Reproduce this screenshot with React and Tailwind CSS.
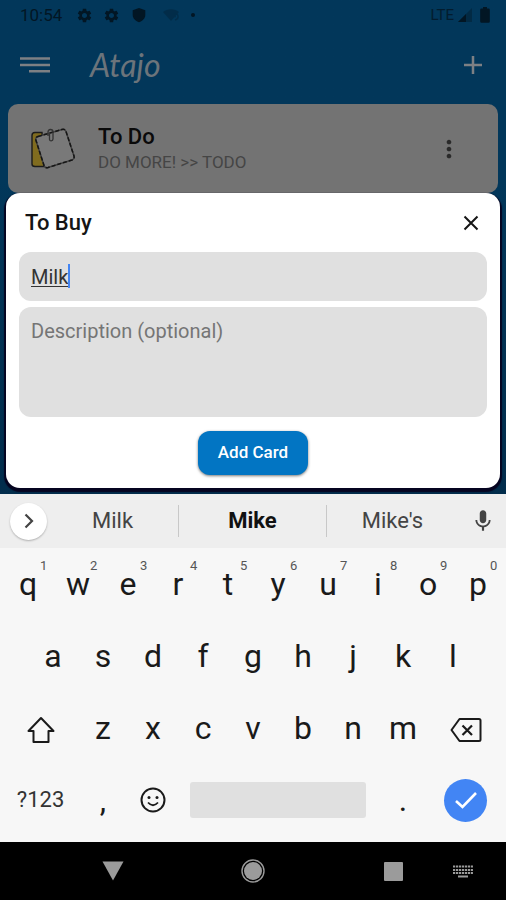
import React, { useState } from 'react';
import { MdSettings, MdMoreVert, MdMic } from 'react-icons/md';

const topRow = ['q', 'w', 'e', 'r', 't', 'y', 'u', 'i', 'o', 'p'];
const middleRow = ['a', 's', 'd', 'f', 'g', 'h', 'j', 'k', 'l'];
const bottomRow = ['z', 'x', 'c', 'v', 'b', 'n', 'm'];

const StatusBar = () => (
  <div className="flex items-center justify-between h-[30px] pl-5 pr-4 text-[#021624]">
    <div className="flex items-center">
      <span className="w-[56px] text-[17px] leading-5">10:54</span>
      <MdSettings className="w-[17px] h-[17px] mr-[10px]" />
      <MdSettings className="w-[17px] h-[17px] mr-3" />
      <svg viewBox="0 0 14 16" className="w-[14px] h-4 mr-4">
        <path d="M7 1 13.3 3.2V8c0 3.4-2.6 5.8-6.3 7.2C3.300 13.800.7 11.400.7 8V3.200Z" fill="currentColor" />
      </svg>
      <svg viewBox="0 0 18 14" className="w-[18px] h-[14px] mr-[11px] opacity-30">
        <path d="M1 4C5.500.200 12.500.200 17 4L9 13Z" fill="currentColor" />
        <path d="M12 6q3.500-1 4 2t-3 4M12 8.500h2" fill="none" stroke="currentColor" strokeWidth="1.500" />
      </svg>
      <span className="w-1 h-1 rounded-full bg-current" />
    </div>
    <div className="flex items-center">
      <span className="text-[15px] leading-5 mr-1 opacity-80">LTE</span>
      <svg viewBox="0 0 14 14" className="w-[14px] h-[14px] mr-2">
        <path d="M14 0V14H0Z" fill="currentColor" opacity="0.4" />
        <path d="M8 6V14H0Z" fill="currentColor" />
      </svg>
      <svg viewBox="0 0 10 16" className="w-[10px] h-4">
        <path d="M3 0h4v1.500h1.500a1.300 1.300 0 0 1 1.300 1.300v11.700a1.300 1.300 0 0 1-1.300 1.300h-7A1.300 1.300 0 0 1 .2 14.500V2.800a1.300 1.300 0 0 1 1.300-1.300H3Z" fill="currentColor" />
      </svg>
    </div>
  </div>
);

const AppBar = () => (
  <header className="flex items-center h-[70px] pl-5 pr-6 text-[#7d8084]">
    <button aria-label="Menu" className="mr-10">
      <svg viewBox="0 0 30 18" className="w-[30px] h-[18px]">
        <path d="M0 2.500H30M0 9H30M9 15.200H30" stroke="currentColor" strokeWidth="2.400" />
      </svg>
    </button>
    <h1 className="flex-1 font-[Lato] italic text-[32px] leading-9 text-[#6c747b]">Atajo</h1>
    <button aria-label="Add">
      <svg viewBox="0 0 18 18" className="w-[18px] h-[18px]">
        <path d="M9 0V18M0 9H18" stroke="currentColor" strokeWidth="2.500" />
      </svg>
    </button>
  </header>
);

const NotesIcon = () => (
  <svg viewBox="0 0 46 42" className="w-[46px] h-[42px] shrink-0">
    <path d="M12 4.500H5Q2 4.500 2 7.500V36q0 2.500 3 2.500h9Z" fill="#806c1f" stroke="#1c1c1c" strokeWidth="1.400" />
    <path d="M8 8.500 32 1.500q3-.8 4 2L44 28q.8 3-2 4L18 39.500q-3 .8-4-2L6 12.500q-1-3 2-4Z" fill="#797979" stroke="#404040" strokeWidth="1.500" />
    <path d="M8 8.500 32 1.500q3-.8 4 2L44 28q.8 3-2 4L18 39.500q-3 .8-4-2L6 12.500q-1-3 2-4Z" fill="none" stroke="#151515" strokeWidth="1.500" strokeDasharray="4 2" />
    <path d="M18 8V4q0-2.500 2.500-2.500T23 4v7q0 1.800-1.800 1.800T19.500 11V6" fill="none" stroke="#333" strokeWidth="1.300" />
  </svg>
);

const ListCard = () => (
  <section className="flex items-center h-[89px] mx-2 mt-1 pl-[22px] pr-[35px] rounded-[10px] bg-[#737373]">
    <NotesIcon />
    <div className="flex-1 ml-[22px]">
      <h2 className="text-[22px] leading-[26px] font-medium text-[#0a0a0a]">To Do</h2>
      <p className="text-[17px] leading-6 text-[#454545]">DO MORE! &gt;&gt; TODO</p>
    </div>
    <button aria-label="More options">
      <MdMoreVert className="w-7 h-7 text-[#2a2a2a]" />
    </button>
  </section>
);

const AddCardDialog = () => {
  const [title, setTitle] = useState('Milk');

  return (
    <form
      onSubmit={(e) => e.preventDefault()}
      className="flex flex-col mx-[6px] px-[13px] pb-[13px] rounded-[14px] bg-white shadow-[0_2px_1px_2px_#050420]"
    >
      <div className="flex items-center justify-between h-[59px] pl-[6px] pr-2">
        <h2 className="text-[22px] leading-7 font-medium text-[#151515]">To Buy</h2>
        <button type="button" aria-label="Close">
          <svg viewBox="0 0 16 16" className="w-4 h-4">
            <path d="M1.500 1.500 14.500 14.500M14.500 1.500 1.500 14.500" stroke="#151515" strokeWidth="2" />
          </svg>
        </button>
      </div>
      <div className="relative">
        <input
          aria-label="Card title"
          value={title}
          onChange={(e) => setTitle(e.target.value)}
          className="block w-full h-[49px] px-3 rounded-xl bg-[#e0e0e0] text-[20px] text-[#333] underline decoration-1 underline-offset-2 outline-none"
        />
        {/* Text caret */}
        <span className="absolute left-[49px] top-3 w-[2px] h-6 bg-[#4285f4]" />
      </div>
      <textarea
        aria-label="Description"
        placeholder="Description (optional)"
        className="block w-full h-[110px] mt-[6px] px-3 py-3 rounded-xl bg-[#e0e0e0] text-[20px] leading-6 placeholder:text-[#757575] resize-none outline-none"
      />
      <button
        type="submit"
        className="self-center h-[44px] mt-[14px] px-5 rounded-xl bg-[#0275c3] text-[17px] font-medium text-white shadow-[0_1px_3px_#0008]"
      >
        Add Card
      </button>
    </form>
  );
};

const Suggestions = () => (
  <div className="flex items-center h-[54px] pl-[10px] pr-3 bg-[#eeeeee] text-[22px] text-[#444]">
    <button aria-label="Expand toolbar" className="flex items-center justify-center w-[37px] h-[37px] rounded-full bg-white shadow-[0_1px_2px_#0004]">
      <svg viewBox="0 0 10 16" className="w-[10px] h-4">
        <path d="M1.500 1.500 8 8 1.500 14.500" fill="none" stroke="#444" strokeWidth="2.200" />
      </svg>
    </button>
    <div className="flex-1 grid grid-cols-[131fr_149fr_131fr] items-center text-center">
      <button className="h-8 leading-8">Milk</button>
      <button className="h-8 leading-8 border-x border-[#c8c8c8] font-bold text-[#111]">Mike</button>
      <button className="h-8 leading-8">Mike's</button>
    </div>
    <button aria-label="Voice input" className="ml-3 w-6">
      <MdMic className="w-[26px] h-[26px] text-[#444]" />
    </button>
  </div>
);

const Key = ({ label, hint }) => (
  <button className="relative col-span-2 flex items-center justify-center">
    {label}
    {hint && <span className="absolute left-[37px] top-[10px] text-[13px] leading-4 text-[#555]">{hint}</span>}
  </button>
);

const Keyboard = () => (
  <div className="px-[3px] pb-[6px] bg-[#f7f7f7] text-[32px] leading-9 text-[#1a1a1a]">
    <div className="grid grid-cols-20 h-[72px]">
      {topRow.map((label, i) => (
        <Key key={label} label={label} hint={String((i + 1) % 10)} />
      ))}
    </div>
    <div className="grid grid-cols-20 h-[72px]">
      <span />
      {middleRow.map((label) => (
        <Key key={label} label={label} />
      ))}
    </div>
    <div className="grid grid-cols-20 h-[72px]">
      <button aria-label="Shift" className="col-span-3 flex items-center justify-center pt-1">
        <svg viewBox="0 0 28 28" className="w-7 h-7">
          <path d="M14 2 26.500 15H21.500V26H6.500V15H1.500Z" fill="none" stroke="currentColor" strokeWidth="2" strokeLinejoin="round" />
        </svg>
      </button>
      {bottomRow.map((label) => (
        <Key key={label} label={label} />
      ))}
      <button aria-label="Backspace" className="col-span-3 flex items-center justify-center pt-1">
        <svg viewBox="0 0 32 26" className="w-8 h-[26px]">
          <path d="M9.500 2H29q1.500 0 1.500 1.500v19q0 1.500-1.500 1.500H9.500L1.500 13Z" fill="none" stroke="currentColor" strokeWidth="2" strokeLinejoin="round" />
          <path d="M12.500 8.500 22 18M22 8.500 12.500 18" stroke="currentColor" strokeWidth="2.200" />
        </svg>
      </button>
    </div>
    <div className="grid grid-cols-20 h-[72px]">
      <button className="col-span-3 text-[22px] text-[#333]">?123</button>
      <Key label="," />
      <button aria-label="Emoji" className="col-span-2 flex items-center justify-center">
        <svg viewBox="0 0 26 26" className="w-[26px] h-[26px]">
          <circle cx="13" cy="13" r="11.500" fill="none" stroke="currentColor" strokeWidth="2" />
          <circle cx="9" cy="10.500" r="1.500" fill="currentColor" />
          <circle cx="17" cy="10.500" r="1.500" fill="currentColor" />
          <path d="M8 15.500q5 5.500 10 0" fill="none" stroke="currentColor" strokeWidth="1.800" />
        </svg>
      </button>
      <div className="col-span-8 flex items-center px-3">
        <button aria-label="Space" className="w-full h-9 rounded-[3px] bg-[#e0e0e0]" />
      </div>
      <Key label="." />
      <div className="col-span-3 flex items-center justify-center">
        <button aria-label="Done" className="flex items-center justify-center w-[43px] h-[43px] rounded-full bg-[#4285f4]">
          <svg viewBox="0 0 22 18" className="w-[22px] h-[18px]">
            <path d="M1 10 7.500 16 21 2" fill="none" stroke="#fff" strokeWidth="2.600" />
          </svg>
        </button>
      </div>
    </div>
  </div>
);

const NavBar = () => (
  <nav className="flex-1 grid grid-cols-[120fr_160fr_120fr_20fr] items-center min-h-[58px] pl-[53px] pr-[33px] bg-black text-[#9b9b9b]">
    <button aria-label="Back" className="flex justify-center">
      <svg viewBox="0 0 22 20" className="w-[22px] h-5">
        <path d="M.5.500H21.500L11 19.500Z" fill="currentColor" />
      </svg>
    </button>
    <button aria-label="Home" className="flex justify-center">
      <svg viewBox="0 0 24 24" className="w-6 h-6">
        <circle cx="12" cy="12" r="11" fill="none" stroke="currentColor" strokeWidth="1.400" />
        <circle cx="12" cy="12" r="9" fill="currentColor" />
      </svg>
    </button>
    <button aria-label="Recent apps" className="flex justify-center">
      <span className="w-[19px] h-[19px] rounded-[1px] bg-current" />
    </button>
    <button aria-label="Switch keyboard">
      <svg viewBox="0 0 20 13" className="w-5 h-[13px]">
        <path d="M0 1.500H20M0 5H20M0 8H20" stroke="currentColor" strokeWidth="2.200" strokeDasharray="2.200 0.760" />
        <path d="M5 11.500H15" stroke="currentColor" strokeWidth="2" />
      </svg>
    </button>
  </nav>
);

const App = () => (
  <div className="flex flex-col min-h-screen font-[Roboto,sans-serif] bg-linear-to-b from-[#02375a] via-[#02375a] via-20% to-[#02203a]">
    <StatusBar />
    <AppBar />
    <main className="pb-[6px]">
      <ListCard />
      <AddCardDialog />
    </main>
    <Suggestions />
    <Keyboard />
    <NavBar />
  </div>
);

export default App;
